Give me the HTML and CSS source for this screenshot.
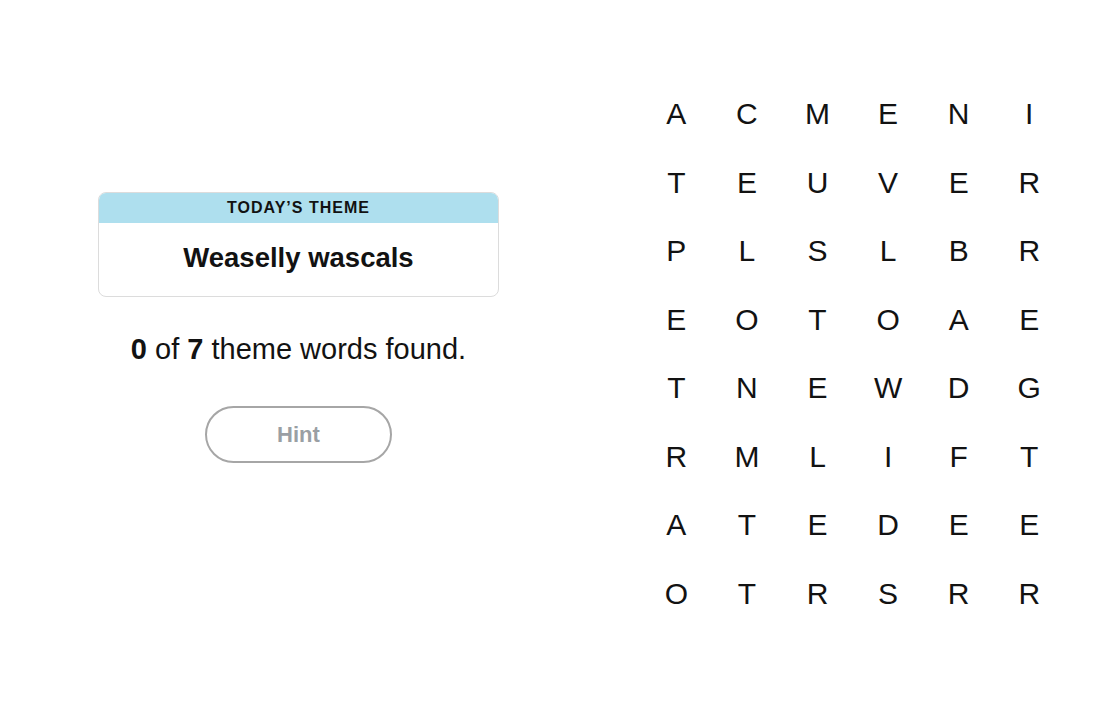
FILE: index.html
```html
<!DOCTYPE html>
<html lang="en">
<head>
    <meta charset="UTF-8">
    <meta name="viewport" content="width=device-width, initial-scale=1.0">
    <title>Strands</title>
    <link rel="stylesheet" href="styles.css">
</head>
<body>
    <div class="game">
        <!-- left: theme + progress -->
        <div class="side">
            <div class="theme-card">
                <div class="theme-label">TODAY’S THEME</div>
                <div class="theme-text">Weaselly wascals</div>
            </div>
            <p class="progress"><b>0</b> of <b>7</b> theme words found.</p>
            <button class="hint-btn" disabled>Hint</button>
        </div>

        <!-- right: letter board -->
        <div class="board" id="board"></div>
    </div>

    <script>
        const rows = [
            'ACMENI',
            'TEUVER',
            'PLSLBR',
            'EOTOAE',
            'TNEWDG',
            'RMLIFT',
            'ATEDEE',
            'OTRSRR'
        ];
        const board = document.getElementById('board');
        rows.forEach(function (row) {
            row.split('').forEach(function (ch) {
                const cell = document.createElement('div');
                cell.className = 'cell';
                cell.textContent = ch;
                board.appendChild(cell);
            });
        });
    </script>
</body>
</html>
```

FILE: styles.css
```css
* {
    margin: 0;
    padding: 0;
    box-sizing: border-box;
}

body {
    font-family: "Liberation Sans", Arial, sans-serif;
    color: #121212;
    background: #fff;
}

.game {
    display: flex;
    align-items: flex-start;
}

/* left column */
.side {
    width: 597px;
    padding-top: 192px;
    display: flex;
    flex-direction: column;
    align-items: center;
}

.theme-card {
    width: 401px;
    border: 1px solid #dcdcdc;
    border-radius: 8px;
    overflow: hidden;
    text-align: center;
}

.theme-label {
    height: 30px;
    line-height: 30px;
    background-color: #aedfee;
    font-size: 16px;
    font-weight: bold;
    letter-spacing: 1px;
}

.theme-text {
    height: 73px;
    line-height: 70px;
    font-size: 27.5px;
    font-weight: bold;
}

.progress {
    margin-top: 36px;
    font-size: 29px;
    line-height: 32px;
}

.hint-btn {
    margin-top: 41px;
    width: 187px;
    height: 57px;
    border: 2px solid #a6a6a6;
    border-radius: 30px;
    background: #fff;
    font-family: inherit;
    font-size: 22px;
    font-weight: bold;
    color: #9a9fa4;
}

/* letter board */
.board {
    margin-top: 80px;
    margin-left: 44px;
    display: grid;
    grid-template-columns: repeat(6, 70.6px);
    grid-auto-rows: 68.5px;
}

.cell {
    display: flex;
    align-items: center;
    justify-content: center;
    font-size: 30px;
}
```
